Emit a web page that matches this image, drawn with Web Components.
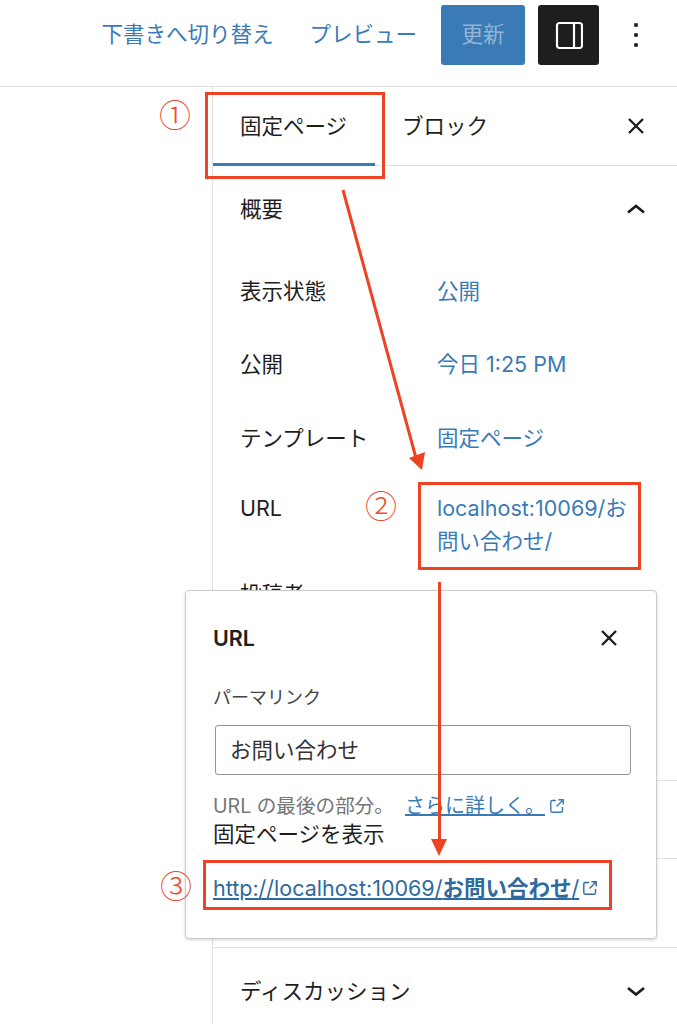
<!DOCTYPE html>
<html lang="ja">
<head>
<meta charset="utf-8">
<title>URL</title>
<style>
  html, body { margin: 0; padding: 0; background: #fff; }
  body {
    width: 677px; height: 1024px; overflow: hidden;
    font-family: Inter, "Noto Sans CJK JP", sans-serif;
    font-size: 21.5px; color: #1e1e1e;
  }
</style>
</head>
<body>
<edit-screen>
  <top-bar slot="top"></top-bar>
  <side-panel slot="side">
    <panel-tabs></panel-tabs>
    <panel-section title="概要" open height="615">
      <field-row label="表示状態" gap="40">公開</field-row>
      <field-row label="公開" gap="41">今日 1:25 PM</field-row>
      <field-row label="テンプレート" gap="37">固定ページ</field-row>
      <field-row label="URL" gap="20">localhost:10069/お<br>問い合わせ/</field-row>
      <field-row label="投稿者" gap="0"></field-row>
    </panel-section>
    <panel-section height="78"></panel-section>
    <panel-section height="89"></panel-section>
    <panel-section title="ディスカッション"></panel-section>
  </side-panel>
  <url-popover slot="over"></url-popover>
  <call-outs slot="over"></call-outs>
</edit-screen>

<script>
const BLUE = "#3a7bb6";
const CLOSE_ICON = `<svg width="24" height="24" viewBox="0 0 24 24" fill="none" stroke="#1e1e1e" stroke-width="2.4"><path d="M5 5l14 14M19 5L5 19"/></svg>`;
const LINK_ICON = `<svg width="18" height="18" viewBox="0 0 18 18" fill="none" stroke="currentColor" stroke-width="1.4"><path d="M8 3.5H4.2c-.9 0-1.4.6-1.4 1.4v8.9c0 .9.6 1.4 1.4 1.4h8.9c.9 0 1.4-.6 1.4-1.4V10"/><path d="M10.5 2.8h4.7v4.7M15 3L8.5 9.5"/></svg>`;

class EditScreen extends HTMLElement {
  constructor() {
    super();
    this.attachShadow({ mode: "open" }).innerHTML = `
    <style>
      :host { display: block; position: relative; width: 677px; height: 1024px; overflow: hidden; }
      .body { display: flex; padding-left: 212px; }
      ::slotted(side-panel) { flex: 1; }
    </style>
    <slot name="top"></slot>
    <div class="body"><slot name="side"></slot></div>
    <slot name="over"></slot>`;
  }
}

class TopBar extends HTMLElement {
  constructor() {
    super();
    this.attachShadow({ mode: "open" }).innerHTML = `
    <style>
      :host { display: flex; align-items: flex-start; justify-content: flex-end; box-sizing: border-box;
        height: 87px; padding: 5px 29px 0 0; border-bottom: 1px solid #e0e0e0; }
      a { color: ${BLUE}; line-height: 58px; }
      .draft { margin-right: 36px; }
      .preview { margin-right: 24px; }
      .save { width: 84px; height: 60px; border-radius: 3px; background: #3a7bb6; color: #93b6d6; line-height: 58px; text-align: center; margin-right: 13px; }
      .toggle { width: 61px; height: 60px; border-radius: 3px; background: #1e1e1e;
        display: flex; align-items: center; justify-content: center; margin-right: 25px; }
      .more { width: 24px; height: 60px; display: flex; align-items: center; justify-content: center; }
    </style>
    <a class="draft">下書きへ切り替え</a>
    <a class="preview">プレビュー</a>
    <div class="save">更新</div>
    <div class="toggle">
      <svg width="28" height="28" viewBox="0 0 28 28" fill="none" stroke="#fff" stroke-width="2.2">
        <rect x="2" y="2" width="25" height="25" rx="2.5"/><path d="M19 2v25"/>
      </svg>
    </div>
    <div class="more">
      <svg width="6" height="28" viewBox="0 0 6 28" fill="#1e1e1e"><rect x="1.2" y="2.2" width="3.6" height="3.6"/><rect x="1.2" y="12.2" width="3.6" height="3.6"/><rect x="1.2" y="22.2" width="3.6" height="3.6"/></svg>
    </div>`;
  }
}

class SidePanel extends HTMLElement {
  constructor() {
    super();
    this.attachShadow({ mode: "open" }).innerHTML = `
    <style>
      :host { display: block; border-left: 1px solid #e0e0e0; height: 937px; }
    </style>
    <slot></slot>`;
  }
}

class PanelTabs extends HTMLElement {
  constructor() {
    super();
    this.attachShadow({ mode: "open" }).innerHTML = `
    <style>
      :host { display: flex; align-items: stretch; box-sizing: border-box; height: 79px; border-bottom: 1px solid #e0e0e0; }
      .tab { padding: 0 28px 5px 27px; display: flex; align-items: center; box-sizing: border-box; height: 79px; }
      .tab.on { box-shadow: inset 0 -3px 0 ${BLUE}; padding-right: 28px; padding-left: 27px; }
      .close { margin-left: auto; margin-right: 29px; display: flex; align-items: center; }
    </style>
    <div class="tab on">固定ページ</div>
    <div class="tab">ブロック</div>
    <div class="close">${CLOSE_ICON}</div>`;
  }
}

class PanelSection extends HTMLElement {
  constructor() {
    super();
    const title = this.getAttribute("title");
    this.removeAttribute("title");
    const open = this.hasAttribute("open");
    const height = this.getAttribute("height");
    const chevron = open ? "M4 15.5L12 9l8 6.5" : "M4 9l8 6.5L20 9";
    this.attachShadow({ mode: "open" }).innerHTML = `
    <style>
      :host { display: block; box-sizing: border-box; border-bottom: 1px solid #e0e0e0; overflow: hidden; ${height ? `height: ${height}px;` : ""} }
      :host(:last-child) { border-bottom: 0; }
      .head { display: flex; align-items: center; justify-content: space-between;
        height: 86px; padding: 0 29px 0 27px; }
      .head span { margin-top: -3px; }
      .rows { padding: 23px 0 0 27px; }
    </style>
    ${title ? `<div class="head"><span>${title}</span>
      <svg width="24" height="24" viewBox="0 0 24 24" fill="none" stroke="#1e1e1e" stroke-width="2.8"><path d="${chevron}"/></svg></div>` : ""}
    ${open ? `<div class="rows"><slot></slot></div>` : ""}`;
  }
}

class FieldRow extends HTMLElement {
  constructor() {
    super();
    const label = this.getAttribute("label");
    const gap = this.getAttribute("gap") || 0;
    this.attachShadow({ mode: "open" }).innerHTML = `
    <style>
      :host { display: flex; line-height: 33px; margin-bottom: ${gap}px; }
      .label { width: 197px; flex: none; }
      .value { color: ${BLUE}; white-space: nowrap; }
    </style>
    <div class="label">${label}</div>
    <div class="value"><slot></slot></div>`;
  }
}

class UrlPopover extends HTMLElement {
  constructor() {
    super();
    this.attachShadow({ mode: "open" }).innerHTML = `
    <style>
      :host { position: absolute; left: 185px; top: 590px; width: 472px; height: 349px; box-sizing: border-box;
        background: #fff; border: 1px solid #ccc; border-radius: 4px; box-shadow: 0 1px 3px rgba(0,0,0,.18);
        padding: 0 25px 0 27px; }
      .head { display: flex; align-items: center; justify-content: space-between; height: 94px; font-weight: 600; font-size: 21.5px; padding-right: 10px; }
      label { display: block; color: #444; font-size: 18px; line-height: 26px; }
      .input { box-sizing: border-box; height: 50px; margin: 14px 0 0 2px; width: 416px; border: 1.5px solid #949494; border-radius: 3px;
        padding: 0 0 4px 14px; display: flex; align-items: center; color: #333; }
      .help { color: #757575; font-size: 19.6px; line-height: 30px; margin-top: 16px; display: flex; align-items: center; white-space: nowrap; }
      .help a { color: ${BLUE}; font-size: 20px; text-decoration: underline; margin-left: 11px; }
      .help svg { color: ${BLUE}; margin-left: 3px; }
      .view { line-height: 30px; margin-top: -2px; }
      .url { display: flex; align-items: center; margin-top: 23px; color: #2f6a9f; white-space: nowrap; line-height: 32px; }
      .url a { text-decoration: underline; }
      .url b { font-weight: 700; }
      .url svg { margin-left: 2px; }
    </style>
    <div class="head"><span>URL</span>${CLOSE_ICON}</div>
    <label>パーマリンク</label>
    <div class="input">お問い合わせ</div>
    <div class="help"><span>URL の最後の部分。</span><a>さらに詳しく。</a>${LINK_ICON}</div>
    <div class="view">固定ページを表示</div>
    <div class="url"><a>http://localhost:10069/<b>お問い合わせ</b>/</a>${LINK_ICON}</div>`;
  }
}

class CallOuts extends HTMLElement {
  constructor() {
    super();
    this.attachShadow({ mode: "open" }).innerHTML = `
    <style>
      :host { position: absolute; left: 0; top: 0; width: 677px; height: 1024px; pointer-events: none; color: #f04a2c; }
      svg { position: absolute; left: 0; top: 0; }
      span { position: absolute; font-size: 32px; line-height: 40px; width: 40px; text-align: center; font-family: "Noto Sans CJK JP", sans-serif; font-weight: 300; }
    </style>
    <svg width="677" height="1024" fill="none" stroke="#ee4323" stroke-width="3">
      <rect x="206.5" y="93.5" width="177" height="84"/>
      <rect x="419.5" y="483.5" width="220" height="85"/>
      <rect x="204.5" y="861.5" width="406" height="47"/>
      <path d="M343 190L416 458"/>
      <path d="M422 470L409 458L425 452Z" fill="#ee4323" stroke="none"/>
      <path d="M439.5 582V842"/>
      <path d="M439 856L431 839H447Z" fill="#ee4323" stroke="none"/>
    </svg>
    <span style="left:155px;top:93px">①</span>
    <span style="left:361px;top:484px">②</span>
    <span style="left:156px;top:864px">③</span>`;
  }
}

customElements.define("edit-screen", EditScreen);
customElements.define("top-bar", TopBar);
customElements.define("side-panel", SidePanel);
customElements.define("panel-tabs", PanelTabs);
customElements.define("panel-section", PanelSection);
customElements.define("field-row", FieldRow);
customElements.define("url-popover", UrlPopover);
customElements.define("call-outs", CallOuts);
</script>
</body>
</html>
